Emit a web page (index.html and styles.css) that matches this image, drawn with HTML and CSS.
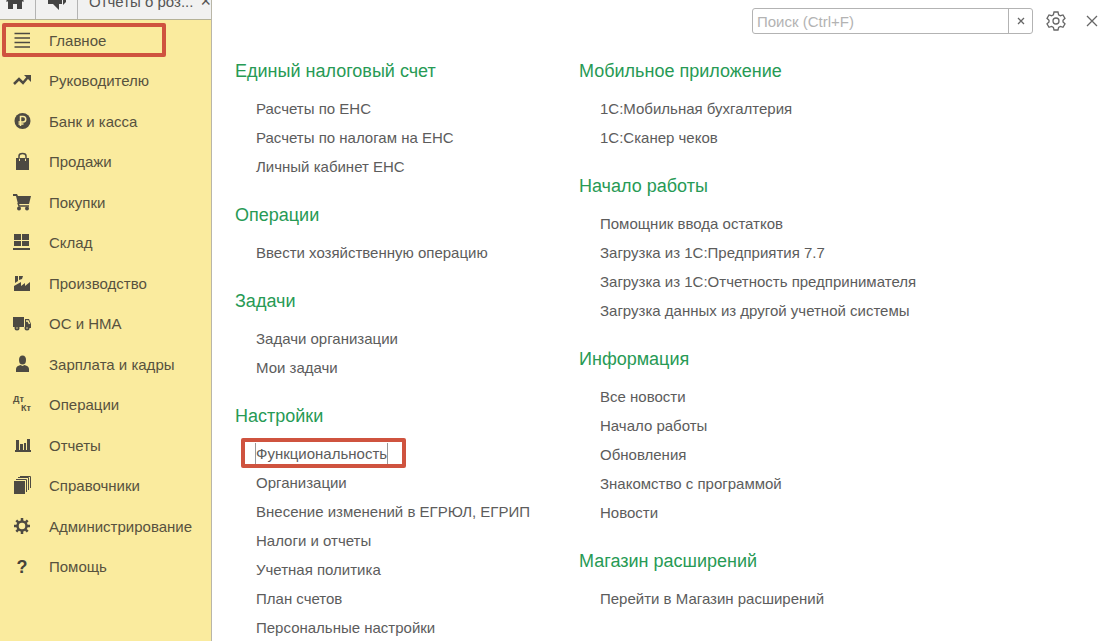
FILE: index.html
```html
<!DOCTYPE html>
<html lang="ru">
<head>
    <meta charset="UTF-8">
    <meta name="viewport" content="width=device-width, initial-scale=1.0">
    <title>Главное</title>
    <link rel="stylesheet" href="styles.css">
</head>
<body>
    <div class="app">
        <aside class="sidebar">
            <div class="tabs">
                <button class="tab tab-home" aria-label="Начальная страница">
                    <svg width="20" height="18" viewBox="0 0 20 18"><path d="M10 0 1 9l1 1 1-1v8h5v-5h4v5h5V9l1 1 1-1z"/></svg>
                </button>
                <button class="tab tab-chat" aria-label="Обсуждения">
                    <svg width="20" height="18" viewBox="0 0 20 18"><path d="M1 0h14v12h-3v6l-6-6H1z"/><path d="M16 1h3v9l-3 3z"/></svg>
                </button>
                <button class="tab tab-page"><span>Отчеты о роз...</span><span class="tab-close">×</span></button>
            </div>
            <nav>
                <ul class="menu">
                    <li><a class="marked" href="#">
                        <svg class="icon" viewBox="0 0 18 18"><path class="line" d="M1.5 2.5h15.5M1.5 7h15.5M1.5 11.5h15.5M1.5 16h15.5"/></svg>Главное</a></li>
                    <li><a href="#">
                        <svg class="icon" viewBox="0 0 18 18"><path class="bold" d="m1 13 5-5 4 4 5-6"/><path d="M11 4h7v7z"/></svg>Руководителю</a></li>
                    <li><a href="#">
                        <svg class="icon" viewBox="0 0 18 18"><circle cx="9.5" cy="9" r="8"/><path class="cut" d="M7.5 14V4.500h2.500a2.500 2.500 0 0 1 0 5.500H5.500M5.500 12h5"/></svg>Банк и касса</a></li>
                    <li><a href="#">
                        <svg class="icon" viewBox="0 0 18 18"><path d="M3 6h3v3h1V6h5v3h1V6h3v12H3z"/><path class="line" d="M6 7V4q0-2.500 3.500-2.500T13 4v3"/></svg>Продажи</a></li>
                    <li><a href="#">
                        <svg class="icon" viewBox="0 0 18 18"><path d="M0 1h4l1 2h13l-2 8H5L3 3H0z"/><path class="line" d="m5 10 1 3h10"/><circle cx="6" cy="15.5" r="2"/><circle cx="14" cy="15.5" r="2"/></svg>Покупки</a></li>
                    <li><a href="#">
                        <svg class="icon" viewBox="0 0 18 18"><path d="M1 1h7v6H1zM9 1h7v6H9zM1 8h7v5H1zM9 8h7v5H9zM0 15h17v2H0z"/></svg>Склад</a></li>
                    <li><a href="#">
                        <svg class="icon" viewBox="0 0 18 18"><path d="M1 17v-5l7-4v4l4-3v3l5-4v9zM2 2h3v5l-3 2zM6 2h4L9 5 6 6z"/></svg>Производство</a></li>
                    <li><a href="#">
                        <svg class="icon" viewBox="0 0 18 18"><path d="M0 3h11v10H0zM12 5h4l2 5v4h-6z"/><path class="cut" d="M13 7h2l1.500 3"/><circle cx="4" cy="14" r="2.500"/><circle cx="14" cy="14" r="2.500"/><path class="cut" d="M3.500 14h1M13.500 14h1"/></svg>ОС и НМА</a></li>
                    <li><a href="#">
                        <svg class="icon" viewBox="0 0 18 18"><ellipse cx="9.5" cy="5" rx="3.500" ry="4.500"/><path d="M3 17v-3q0-3 4.500-4l2 1 2-1q4.500 1 4.500 4v3z"/></svg>Зарплата и кадры</a></li>
                    <li><a href="#">
                        <span class="icon debit"><span>Дт</span><span>Кт</span></span>Операции</a></li>
                    <li><a href="#">
                        <svg class="icon" viewBox="0 0 18 18"><path d="M3 4h3v11H3zM7 8h3v7H7zM11 7h2v8h-2zM14 3h3v12h-3zM2 14h16v2H2z"/></svg>Отчеты</a></li>
                    <li><a href="#">
                        <svg class="icon" viewBox="0 0 18 18"><path d="M1 5h11v13H1z"/><path class="thin" d="M3 3.500h10.500V16M5 1.500h10.500V14M7 .5h10.500V12"/></svg>Справочники</a></li>
                    <li><a href="#">
                        <svg class="icon" viewBox="0 0 18 18"><circle class="bold" cx="9" cy="9" r="4.500"/><path class="bold" d="M9 1v3M9 14v3M1 9h3M14 9h3M3.300 3.300l2 2M12.700 12.700l2 2M3.300 14.700l2-2M12.700 5.300l2-2"/></svg>Администрирование</a></li>
                    <li><a href="#">
                        <span class="icon help">?</span>Помощь</a></li>
                </ul>
            </nav>
        </aside>

        <main class="content">
            <div class="toolbar">
                <form class="search">
                    <input type="text" placeholder="Поиск (Ctrl+F)" aria-label="Поиск">
                    <button type="reset" aria-label="Очистить"><svg width="8" height="8" viewBox="0 0 8 8"><path d="m1 1 6 6M7 1 1 7"/></svg></button>
                </form>
                <button class="tool" aria-label="Настройки">
                    <svg width="20" height="20" viewBox="0 0 20 20"><path d="M8 1h4l.6 2.700 1.800 1 2.600-.8 2 3.400-2 1.900v1.800l2 1.900-2 3.400-2.600-.8-1.800 1L12 19H8l-.6-2.500-1.800-1-2.600.8-2-3.400L3 11V9.200L1 7.300l2-3.400 2.600.8 1.800-1z"/><circle cx="10" cy="10" r="3"/></svg>
                </button>
                <button class="tool" aria-label="Закрыть">
                    <svg width="12" height="12" viewBox="0 0 12 12"><path d="m1 1 10 10M11 1 1 11"/></svg>
                </button>
            </div>

            <div class="columns">
                <div class="column">
                    <section>
                        <h2>Единый налоговый счет</h2>
                        <ul>
                            <li><a href="#">Расчеты по ЕНС</a></li>
                            <li><a href="#">Расчеты по налогам на ЕНС</a></li>
                            <li><a href="#">Личный кабинет ЕНС</a></li>
                        </ul>
                    </section>
                    <section>
                        <h2>Операции</h2>
                        <ul>
                            <li><a href="#">Ввести хозяйственную операцию</a></li>
                        </ul>
                    </section>
                    <section>
                        <h2>Задачи</h2>
                        <ul>
                            <li><a href="#">Задачи организации</a></li>
                            <li><a href="#">Мои задачи</a></li>
                        </ul>
                    </section>
                    <section>
                        <h2>Настройки</h2>
                        <ul>
                            <li><a class="focused" href="#">Функциональность</a></li>
                            <li><a href="#">Организации</a></li>
                            <li><a href="#">Внесение изменений в ЕГРЮЛ, ЕГРИП</a></li>
                            <li><a href="#">Налоги и отчеты</a></li>
                            <li><a href="#">Учетная политика</a></li>
                            <li><a href="#">План счетов</a></li>
                            <li><a href="#">Персональные настройки</a></li>
                        </ul>
                    </section>
                </div>
                <div class="column">
                    <section>
                        <h2>Мобильное приложение</h2>
                        <ul>
                            <li><a href="#">1С:Мобильная бухгалтерия</a></li>
                            <li><a href="#">1С:Сканер чеков</a></li>
                        </ul>
                    </section>
                    <section>
                        <h2>Начало работы</h2>
                        <ul>
                            <li><a href="#">Помощник ввода остатков</a></li>
                            <li><a href="#">Загрузка из 1С:Предприятия 7.7</a></li>
                            <li><a href="#">Загрузка из 1С:Отчетность предпринимателя</a></li>
                            <li><a href="#">Загрузка данных из другой учетной системы</a></li>
                        </ul>
                    </section>
                    <section>
                        <h2>Информация</h2>
                        <ul>
                            <li><a href="#">Все новости</a></li>
                            <li><a href="#">Начало работы</a></li>
                            <li><a href="#">Обновления</a></li>
                            <li><a href="#">Знакомство с программой</a></li>
                            <li><a href="#">Новости</a></li>
                        </ul>
                    </section>
                    <section>
                        <h2>Магазин расширений</h2>
                        <ul>
                            <li><a href="#">Перейти в Магазин расширений</a></li>
                        </ul>
                    </section>
                </div>
            </div>
        </main>
    </div>
</body>
</html>
```
FILE: styles.css
```css
* {
    margin: 0;
    padding: 0;
    box-sizing: border-box;
}
body {
    background-color: #ffffff;
    font-family: "Liberation Sans", Arial, sans-serif;
    font-size: 15px;
    color: #5c5c5c;
    overflow: hidden;
}
ul {
    list-style: none;
}
a {
    color: inherit;
    text-decoration: none;
}
button {
    background: none;
    border: none;
    font: inherit;
    color: inherit;
    cursor: pointer;
}
.app {
    display: flex;
    min-height: 100vh;
}

/* Sidebar */
.sidebar {
    flex: none;
    width: 212px;
    background-color: #faeb9e;
    border-right: 1px solid #b9b6a8;
    color: #57523e;
}
.tabs {
    display: flex;
    align-items: flex-end;
    height: 20px;
    background-color: #f1f1f1;
    border-bottom: 1px solid #b5b298;
    overflow: hidden;
}
.tab {
    display: flex;
    justify-content: center;
    align-items: center;
    height: 36px;
    border-right: 1px solid #b4b4b4;
    color: #555555;
    white-space: nowrap;
}
.tab svg {
    fill: #444444;
}
.tab-home {
    width: 36px;
    padding-right: 6px;
}
.tab-chat {
    width: 42px;
}
.tab-page {
    flex: 1;
    justify-content: space-between;
    padding-left: 11px;
    border-right: none;
}
.tab-close {
    font-size: 18px;
}
.menu li:nth-child(even) {
    margin-bottom: 1px;
}
.menu a {
    position: relative;
    display: flex;
    align-items: center;
    gap: 18px;
    height: 40px;
    padding-left: 13px;
}
.icon {
    flex: none;
    width: 18px;
    height: 18px;
    fill: #4d4a42;
}
.icon .line, .icon .bold, .icon .thin, .icon .cut {
    fill: none;
    stroke: #4d4a42;
    stroke-width: 1.5;
}
.icon .bold {
    stroke-width: 2.5;
}
.icon .thin {
    stroke-width: 1;
}
.icon .cut {
    stroke: #faeb9e;
}
.debit {
    display: flex;
    flex-direction: column;
    font-size: 9px;
    font-weight: bold;
    line-height: 9px;
}
.debit span:last-child {
    align-self: flex-end;
}
.help {
    font-size: 18px;
    font-weight: bold;
    line-height: 20px;
    text-align: center;
    color: #45423a;
}

/* Red frames drawn over the links */
.marked::after, .focused::after {
    content: "";
    position: absolute;
    border: 4px solid #cf533f;
    border-radius: 2px;
}
.marked::after {
    inset: 3px 45px 3px 2px;
}
.focused::after {
    inset: -5px -19px -4px -15px;
}

/* Content */
.content {
    flex: 1;
    padding: 8px 12px 0 23px;
}
.toolbar {
    display: flex;
    justify-content: flex-end;
    align-items: center;
    height: 26px;
}
.search {
    display: flex;
    width: 281px;
    height: 26px;
    margin-right: 8px;
    border: 1px solid #b3b3b3;
    border-radius: 3px;
}
.search input {
    flex: 1;
    min-width: 0;
    padding-left: 4px;
    border: none;
    outline: none;
    background: none;
    font: inherit;
}
.search input::placeholder {
    color: #b3b3b3;
}
.search button {
    width: 24px;
    border-left: 1px solid #b3b3b3;
}
.toolbar svg {
    display: block;
    margin: 0 auto;
    fill: none;
    stroke: #666666;
    stroke-width: 1.3;
}
.tool {
    width: 30px;
    height: 26px;
}
.tool:last-child {
    width: 18px;
    margin-left: 12px;
}
.columns {
    display: grid;
    grid-template-columns: 344px 1fr;
    margin-top: 25px;
}
section {
    margin-bottom: 22px;
}
h2 {
    margin-bottom: 11px;
    font-size: 18px;
    font-weight: normal;
    line-height: 24px;
    color: #279a55;
}
section ul {
    padding-left: 21px;
}
section li {
    height: 29px;
    line-height: 29px;
}
.focused {
    position: relative;
    display: inline-block;
    height: 21px;
    line-height: 21px;
    box-shadow: -1px 0 #999999, 1px 0 #999999;
}
```
